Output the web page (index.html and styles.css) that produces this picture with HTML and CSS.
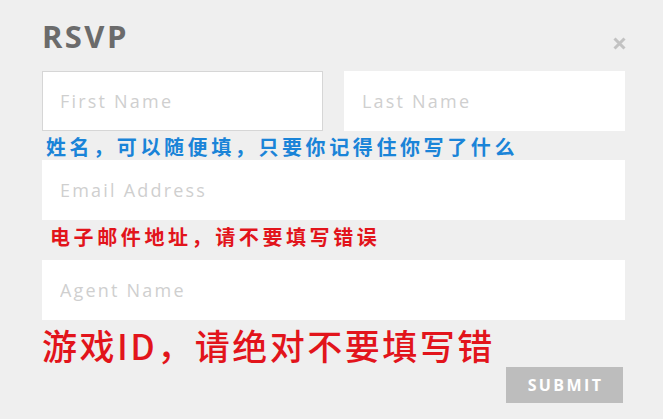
FILE: index.html
```html
<!DOCTYPE html>
<html lang="zh">
<head>
<meta charset="utf-8">
<link rel="stylesheet" href="styles.css">
</head>
<body>
<div class="modal">
  <div class="head">
    <h1 class="title">RSVP</h1>
    <svg class="close" width="13" height="13" viewBox="0 0 13 13" aria-label="close"><path d="M1.5 1.5 L11.5 11.5 M11.5 1.5 L1.5 11.5" stroke="#c2c2c2" stroke-width="3" stroke-linecap="butt"/></svg>
  </div>
  <div class="row">
    <input class="field bordered" placeholder="First Name">
    <input class="field" placeholder="Last Name">
  </div>
  <div class="note blue">姓名，可以随便填，只要你记得住你写了什么</div>
  <input class="field" placeholder="Email Address">
  <div class="note red">电子邮件地址，请不要填写错误</div>
  <input class="field" placeholder="Agent Name">
  <div class="big red">游戏ID，请绝对不要填写错</div>
  <div class="actions"><button class="submit">SUBMIT</button></div>
</div>
</body>
</html>
```
FILE: styles.css
```css
html, body {
  margin: 0;
  padding: 0;
  background: #efefef;
}
body {
  width: 663px;
  height: 419px;
  overflow: hidden;
  font-family: "Open Sans", "Noto Sans CJK SC", sans-serif;
}
.modal {
  padding: 18px 38px 0 42px;
  display: flex;
  flex-direction: column;
}
.head {
  display: flex;
  justify-content: space-between;
  align-items: flex-start;
  height: 53px;
}
.title {
  margin: 0;
  font-family: "Open Sans", sans-serif;
  font-weight: 700;
  font-size: 31px;
  line-height: 36px;
  color: #6b6b6b;
  letter-spacing: 2.4px;
}
.close {
  display: block;
  margin-top: 19px;
  margin-right: -1px;
}
.row {
  display: grid;
  grid-template-columns: 1fr 1fr;
  gap: 21px;
}
.field {
  display: block;
  box-sizing: border-box;
  width: 100%;
  height: 60px;
  margin: 0;
  border: 0;
  outline: none;
  background: #fff;
  padding: 0 18px;
  font-family: "Open Sans", sans-serif;
  font-size: 18px;
  letter-spacing: 2.2px;
  color: #555;
}
.field::placeholder {
  color: #cfcfcf;
}
.bordered {
  border: 1px solid #d6d6d6;
  padding-left: 17px;
}
.note {
  font-family: "Noto Sans CJK SC", sans-serif;
  font-weight: 700;
  font-size: 20px;
  letter-spacing: 3.6px;
  line-height: 24px;
}
.row + .note {
  padding: 4px 0 1px 4px;
}
.note.red {
  padding: 5px 0 11px 8px;
}
.blue { color: #1a84d8; }
.red { color: #e2141b; }
.big {
  font-family: "Noto Sans CJK SC", sans-serif;
  font-size: 35px;
  line-height: 47px;
  padding-top: 1px;
  height: 46px;
  letter-spacing: 2.5px;
  font-weight: 500;
}
.actions {
  display: flex;
  justify-content: flex-end;
  padding-right: 2px;
}
.submit {
  width: 117px;
  height: 36px;
  border: 0;
  background: #bdbdbd;
  color: #fff;
  font-family: "Open Sans", sans-serif;
  font-weight: 700;
  font-size: 16px;
  letter-spacing: 2.4px;
  padding: 0 0 0 2px;
}
```
